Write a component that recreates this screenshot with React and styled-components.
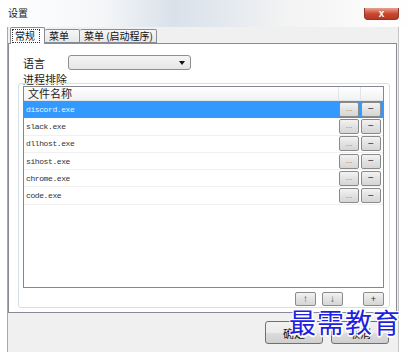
// Settings dialog, Windows 7 style
import React from 'react';
import styled, { createGlobalStyle } from 'styled-components';

const GlobalStyle = createGlobalStyle`
    body {
        margin: 0;
        background: #ffffff;
        font-family: "Noto Sans CJK SC", "Liberation Sans", sans-serif;
        font-size: 11px;
        color: #1a1a1a;
    }
`;

// Whole window
const Window = styled.div`
    position: relative;
    width: 412px;
    height: 352px;
    overflow: hidden;
    background: #ffffff;
`;

// Title bar with blurred glass look
const TitleBar = styled.div`
    height: 27px;
    display: flex;
    align-items: flex-start;
    background: linear-gradient(90deg, #ffffff 0%, #f4f6f8 25%, #d9e1ea 42%, #e4e9ef 55%, #f3f3f3 70%, #ffffff 100%);
`;

const Title = styled.span`
    margin: 6px 0 0 8px;
    font-size: 10px;
    line-height: 14px;
    color: #222;
`;

const CloseButton = styled.div`
    margin: 8px 13px 0 auto;
    width: 35px;
    height: 12px;
    border-radius: 0 0 4px 4px;
    background: linear-gradient(#e6a291, #c9452c 55%, #b53a22);
    border: 1px solid #8d3a2a;
    border-top: none;
    box-sizing: border-box;
    color: #fff;
    font-family: "Liberation Sans", sans-serif;
    font-size: 10px;
    font-weight: bold;
    line-height: 11px;
    text-align: center;
`;

// Client area of the dialog
const Client = styled.div`
    margin-left: 7px;
    width: 392px;
    height: 325px;
    box-sizing: border-box;
    border-left: 1px solid #a8a8a8;
    border-right: 1px solid #c4c4c4;
    background: #f0f0f0;
    display: flex;
    flex-direction: column;
`;

const TabStrip = styled.div`
    height: 16px;
    display: flex;
    align-items: flex-end;
    padding-left: 2px;
    position: relative;
    z-index: 1;
`;

const Tab = styled.div`
    box-sizing: border-box;
    width: ${p => p.w}px;
    height: ${p => (p.active ? 17 : 14)}px;
    margin-bottom: ${p => (p.active ? -1 : 0)}px;
    border: 1px solid #898c95;
    border-bottom: ${p => (p.active ? 'none' : '1px solid #898c95')};
    border-left: ${p => (p.first || p.active ? '1px solid #898c95' : 'none')};
    border-radius: 2px 2px 0 0;
    background: ${p => (p.active ? '#ffffff' : 'linear-gradient(#f6f6f6, #e8e8e8)')};
    font-size: 10px;
    line-height: 12px;
    padding: ${p => (p.active ? '1px 0 0 1px' : '0 0 0 4px')};
    color: #111;
    white-space: nowrap;
`;

const FocusText = styled.span`
    display: inline-block;
    border: 1px dotted #333;
    padding: 0 4px 0 2px;
    line-height: 12px;
`;

// The white tab page
const Panel = styled.div`
    height: 270px;
    margin-right: 1px;
    box-sizing: border-box;
    border: 1px solid #898c95;
    background: #ffffff;
    padding: 11px 6px 0 9px;
    display: flex;
    flex-direction: column;
`;

const FieldRow = styled.div`
    display: flex;
    align-items: center;
    padding-left: 5px;
    height: 15px;
`;

const Label = styled.span`
    width: 45px;
    font-size: 11px;
    line-height: 14px;
`;

const Select = styled.div`
    width: 123px;
    height: 15px;
    box-sizing: border-box;
    border: 1px solid #8e8f8f;
    border-radius: 3px;
    background: linear-gradient(#f4f4f4, #e6e6e6);
    display: flex;
    align-items: center;
    justify-content: flex-end;
    padding-right: 5px;
`;

const Arrow = styled.span`
    width: 0;
    height: 0;
    border-left: 3px solid transparent;
    border-right: 3px solid transparent;
    border-top: 4px solid #111;
`;

const GroupLabel = styled.span`
    padding-left: 5px;
    margin-top: 2px;
    font-size: 11px;
    line-height: 14px;
`;

const GroupBox = styled.div`
    margin-top: -3px;
    height: 225px;
    box-sizing: border-box;
    border: 1px solid #d5dfe5;
    border-radius: 3px;
    padding: 2px 5px 0 4px;
    display: flex;
    flex-direction: column;
`;

// List view
const ListView = styled.div`
    height: 202px;
    box-sizing: border-box;
    border: 1px solid #828790;
    background: #ffffff;
`;

const Columns = `
    display: grid;
    grid-template-columns: 1fr 22px 22px;
`;

const Header = styled.div`
    ${Columns}
    height: 14px;
    box-sizing: border-box;
    background: linear-gradient(#ffffff, #f1f2f4);
    border-bottom: 1px solid #e3e4e6;
`;

const HeaderCell = styled.div`
    padding-left: ${p => (p.pad ? 4 : 0)}px;
    border-right: ${p => (p.last ? 'none' : '1px solid #e3e4e6')};
    font-size: 11px;
    line-height: 13px;
    color: #222;
`;

const Row = styled.div`
    ${Columns}
    height: 17.3px;
    align-items: center;
    background: ${p => (p.selected ? '#3399ff' : '#ffffff')};
    border-bottom: 1px solid ${p => (p.selected ? '#3399ff' : '#f0f0f0')};
    box-sizing: border-box;
`;

const FileName = styled.span`
    padding-left: 2px;
    font-family: "Liberation Mono", "DejaVu Sans Mono", monospace;
    font-size: 8px;
    letter-spacing: -0.4px;
    color: ${p => (p.selected ? '#eaf3ff' : '#333')};
`;

const SmallButton = styled.div`
    width: ${p => p.w || 20}px;
    height: ${p => p.h || 15}px;
    box-sizing: border-box;
    border: 1px solid #8a8a8a;
    border-radius: 2px;
    background: linear-gradient(#f3f3f3, #e2e2e2 50%, #d6d6d6);
    display: flex;
    align-items: center;
    justify-content: center;
    font-family: "Liberation Sans", sans-serif;
    font-size: ${p => p.fs || 8}px;
    color: ${p => p.color || '#777'};
    line-height: 1;
`;

const ListFooter = styled.div`
    display: flex;
    justify-content: flex-end;
    align-items: center;
    gap: 6px;
    margin-top: 4px;
`;

const Spacer = styled.div`
    width: 8px;
`;

// Bottom buttons
const Footer = styled.div`
    flex: 1;
    display: flex;
    justify-content: flex-end;
    align-items: flex-start;
    gap: 8px;
    padding: 8px 9px 0 0;
`;

const DialogButton = styled.div`
    width: 58px;
    height: 23px;
    box-sizing: border-box;
    border: 1px solid #707070;
    border-radius: 3px;
    background: linear-gradient(#f2f2f2, #ebebeb 50%, #dddddd 51%, #cfcfcf);
    display: flex;
    align-items: center;
    justify-content: center;
    font-size: 11px;
    color: #111;
`;

// Site watermark over the lower right corner
const Watermark = styled.div`
    position: absolute;
    left: 289px;
    top: 302px;
    font-family: "Noto Sans CJK SC", serif;
    font-size: 27px;
    letter-spacing: 1px;
    color: #1f1fe0;
    text-shadow: 1px 1px 0 #fff, -1px -1px 0 #fff, 1px -1px 0 #fff, -1px 1px 0 #fff, 0 2px 0 #fff, 2px 0 0 #fff;
`;

const files = ['discord.exe', 'slack.exe', 'dllhost.exe', 'sihost.exe', 'chrome.exe', 'code.exe'];

function App() {
    return (
        <Window>
            <GlobalStyle />
            <TitleBar>
                <Title>设置</Title>
                <CloseButton>x</CloseButton>
            </TitleBar>
            <Client>
                <TabStrip>
                    <Tab active first w={35}><FocusText>常规</FocusText></Tab>
                    <Tab w={35}>菜单</Tab>
                    <Tab w={77}>菜单 (启动程序)</Tab>
                </TabStrip>
                <Panel>
                    <FieldRow>
                        <Label>语言</Label>
                        <Select><Arrow /></Select>
                    </FieldRow>
                    <GroupLabel>进程排除</GroupLabel>
                    <GroupBox>
                        <ListView>
                            <Header>
                                <HeaderCell pad>文件名称</HeaderCell>
                                <HeaderCell />
                                <HeaderCell last />
                            </Header>
                            {files.map((f, i) => (
                                <Row key={f} selected={i === 0}>
                                    <FileName selected={i === 0}>{f}</FileName>
                                    <SmallButton>...</SmallButton>
                                    <SmallButton fs={10} color="#333">−</SmallButton>
                                </Row>
                            ))}
                        </ListView>
                        <ListFooter>
                            <SmallButton w={21} h={14} fs={10} color="#555">↑</SmallButton>
                            <SmallButton w={21} h={14} fs={10} color="#555">↓</SmallButton>
                            <Spacer />
                            <SmallButton w={21} h={14} fs={9} color="#333">+</SmallButton>
                        </ListFooter>
                    </GroupBox>
                </Panel>
                <Footer>
                    <DialogButton>确定</DialogButton>
                    <DialogButton>取消</DialogButton>
                </Footer>
            </Client>
            <Watermark>最需教育</Watermark>
        </Window>
    );
}

export default App;
